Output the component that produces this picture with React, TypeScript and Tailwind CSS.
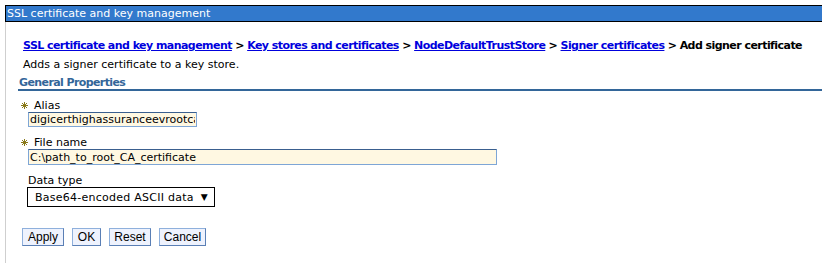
import React from "react";

const V = { fontFamily: '"DejaVu Sans", Verdana, sans-serif' };
const A = { fontFamily: '"Liberation Sans", Arial, sans-serif' };

function Star() {
  return (
    <svg width="7" height="7" viewBox="0 0 7 7" className="mr-[6px]">
      <g stroke="#8a7a1a" strokeWidth="1">
        <line x1="3.5" y1="0" x2="3.5" y2="7" />
        <line x1="0" y1="3.5" x2="7" y2="3.5" />
        <line x1="1" y1="1" x2="6" y2="6" />
        <line x1="6" y1="1" x2="1" y2="6" />
      </g>
    </svg>
  );
}

function Btn({ children, w }: { children: React.ReactNode; w: string }) {
  return (
    <button
      className={`${w} h-[18px] bg-[#eef2fd] border border-[#8fb0dc] border-b-[#5a7fb5] border-r-[#5a7fb5] text-[12px] leading-[16px] text-black flex items-center justify-center`}
      style={A}
    >
      {children}
    </button>
  );
}

export default function App() {
  const link = "text-[#0000dd] underline";
  return (
    <div className="w-[822px] h-[263px] bg-white overflow-hidden" style={V}>
      <div className="pt-[5px] pl-[5px]">
        <div className="h-[17px] bg-[#3279cc] border-y border-l border-black text-white text-[11px] leading-[15px] pl-[1px] whitespace-nowrap">
          SSL certificate and key management
        </div>
      </div>
      <div className="ml-[5px] border-l border-[#cfcfcf] h-[241px] pl-[12px]">
        <div className="pt-[17px] pl-[5px] text-[11px] leading-[13px] font-bold whitespace-nowrap text-black tracking-[-0.55px]">
          <a className={link}>SSL certificate and key management</a> &gt;{" "}
          <a className={link}>Key stores and certificates</a> &gt;{" "}
          <a className={link}>NodeDefaultTrustStore</a> &gt;{" "}
          <a className={link}>Signer certificates</a> &gt; Add signer certificate
        </div>
        <div className="pt-[6px] pl-[5px] text-[11px] leading-[13px] text-black">
          Adds a signer certificate to a key store.
        </div>
        <div className="mt-[5px] pl-[1px] text-[11px] leading-[13px] font-bold text-[#336699] border-b-2 border-[#336699] tracking-[-0.6px]">
          General Properties
        </div>
        <div className="mt-[8px] pl-[3px] flex items-center text-[11px] leading-[13px] text-black">
          <Star />
          Alias
        </div>
        <div className="pl-[10px] flex">
          <input
            readOnly
            value="digicerthighassuranceevrootca"
            className="block w-[169px] h-[15px] bg-[#fff8e2] border border-[#7ea6d6] border-t-[#3a5f8f] text-[11px] leading-[13px] px-[1px] text-black outline-none"
            style={V}
          />
        </div>
        <div className="mt-[9px] pl-[3px] flex items-center text-[11px] leading-[13px] text-black">
          <Star />
          File name
        </div>
        <div className="pl-[10px] flex">
          <input
            readOnly
            value="C:\path_to_root_CA_certificate"
            className="block w-[469px] h-[16px] bg-[#fff8e2] border border-[#7ea6d6] border-t-[#3a5f8f] text-[11px] leading-[13px] px-[1px] text-black outline-none"
            style={V}
          />
        </div>
        <div className="mt-[9px] pl-[10px] text-[11px] leading-[13px] text-black">Data type</div>
        <div className="pl-[9px] flex">
          <div className="w-[188px] h-[20px] border border-black flex items-center justify-between pl-[7px] pr-[6px] text-[11px] leading-[13px] text-black tracking-[0.25px]">
            <span>Base64-encoded ASCII data</span>
            <span className="text-[9px]">▼</span>
          </div>
        </div>
        <div className="mt-[21px] pl-[4px] flex gap-[8px]">
          <Btn w="w-[42px]">Apply</Btn>
          <Btn w="w-[29px]">OK</Btn>
          <Btn w="w-[42px]">Reset</Btn>
          <Btn w="w-[47px]">Cancel</Btn>
        </div>
      </div>
    </div>
  );
}
